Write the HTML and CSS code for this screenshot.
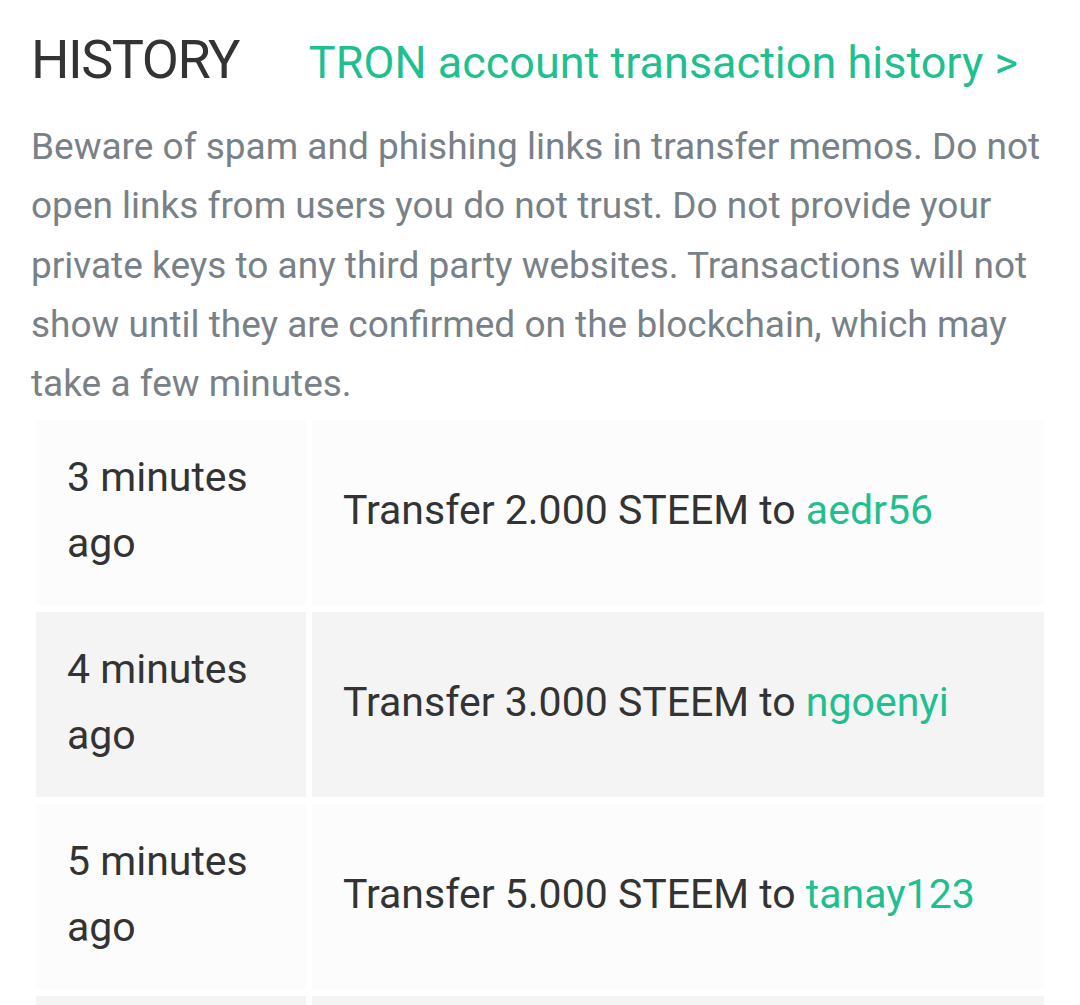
FILE: index.html
```html
<!DOCTYPE html>
<html>
<head>
    <title>History</title>
    <link rel="stylesheet" href="styles.css">
</head>
<body>

<div class="history">
    <div class="history-header">
        <h2 class="title">HISTORY</h2>
        <a class="tron-link" href="#">TRON account transaction history &gt;</a>
    </div>
    <p class="warning">Beware of spam and phishing links in transfer memos. Do not open links from users you do not trust. Do not provide your private keys to any third party websites. Transactions will not show until they are confirmed on the blockchain, which may take a few minutes.</p>

    <table class="transfers">
        <tr>
            <td class="time">3 minutes ago</td>
            <td class="desc">Transfer 2.000 STEEM to <a href="#">aedr56</a></td>
        </tr>
        <tr>
            <td class="time">4 minutes ago</td>
            <td class="desc">Transfer 3.000 STEEM to <a href="#">ngoenyi</a></td>
        </tr>
        <tr>
            <td class="time">5 minutes ago</td>
            <td class="desc">Transfer 5.000 STEEM to <a href="#">tanay123</a></td>
        </tr>
        <tr>
            <td class="time">6 minutes ago</td>
            <td class="desc">Transfer 1.000 STEEM to <a href="#">steemcurator</a></td>
        </tr>
    </table>
</div>

</body>
</html>
```

FILE: styles.css
```css
body {
    margin: 0;
    background-color: #fff;
    font-family: Roboto, "Noto Sans", sans-serif;
    color: #333;
}

.history {
    padding: 0 30px 0 31px;
}

.history-header {
    display: flex;
    align-items: baseline;
    padding-top: 25px;
}

.title {
    margin: 0;
    font-size: 54px;
    font-weight: 400;
    letter-spacing: -1.5px;
    line-height: 70px;
    color: #333;
}

.tron-link {
    margin-left: 70px;
    font-size: 45px;
    color: #1fbf8f;
    text-decoration: none;
}

.warning {
    margin: 22px 0 0 0;
    font-size: 37px;
    line-height: 59.3px;
    color: #788187;
}

.transfers {
    margin: 0 0 0 -1px;
    width: calc(100% + 1px);
    border-collapse: separate;
    border-spacing: 6px 7px;
    font-size: 41px;
}

.transfers td {
    padding: 24px 30px 29px 31px;
    line-height: 66px;
    background-color: #fcfcfc;
}

.transfers tr:nth-child(even) td {
    background-color: #f4f4f4;
}

.time {
    width: 209px;
}

.desc a {
    color: #1fbf8f;
    text-decoration: none;
}
```
